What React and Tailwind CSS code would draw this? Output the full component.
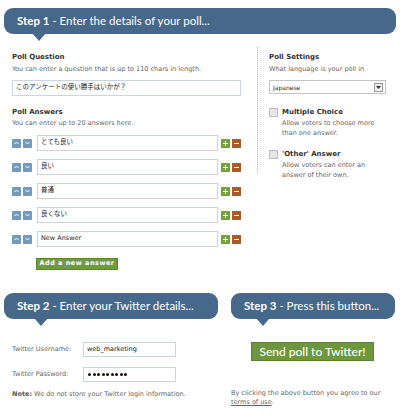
import React from "react";

const small = "font-['DejaVu_Sans',sans-serif] text-[6.5px] text-[#666]";
const head = "font-['DejaVu_Sans',sans-serif] text-[7px] font-bold text-[#333]";
const field = "font-['DejaVu_Sans','Noto_Sans_CJK_JP',sans-serif] text-[6.5px] text-[#222]";

const Banner = ({ step, text, tip }) => (
  <div className="relative h-[26px] rounded-[9px] bg-[#46688a] flex items-center pl-[13px]">
    <span className="font-['Lato',sans-serif] text-[11.5px] text-white whitespace-nowrap">
      <b className="font-bold">Step {step}</b> - {text}
    </span>
    <svg
      className="absolute top-[25px]"
      style={{ left: tip }}
      width="14"
      height="8"
      viewBox="0 0 14 8"
    >
      <path d="M0 0 L14 0 L7 8 Z" fill="#46688a" />
    </svg>
  </div>
);

const Arrow = ({ up }) => (
  <div className="w-[9px] h-[9px] bg-[#7399bd] rounded-[1px] flex items-center justify-center">
    <svg width="5" height="4" viewBox="0 0 5 4">
      <path
        d={up ? "M0.5 3 L2.5 1 L4.5 3" : "M0.5 1 L2.5 3 L4.5 1"}
        stroke="white"
        strokeWidth="1"
        fill="none"
      />
    </svg>
  </div>
);

const AnswerRow = ({ value }) => (
  <div className="flex items-center h-[16px]">
    <Arrow up />
    <div className="w-[2px]" />
    <Arrow />
    <div className={`ml-[5px] w-[181px] h-[16px] border border-[#c9d5e0] bg-white flex items-center px-[3px] ${field}`}>
      {value}
    </div>
    <div className="ml-[3px] w-[9px] h-[9px] bg-[#76a03c] flex items-center justify-center">
      <svg width="5" height="5" viewBox="0 0 5 5">
        <path d="M2.5 0 V5 M0 2.5 H5" stroke="white" strokeWidth="1" />
      </svg>
    </div>
    <div className="ml-[2px] w-[9px] h-[9px] bg-[#a65a30] flex items-center justify-center">
      <div className="w-[5px] h-[1px] bg-white" />
    </div>
  </div>
);

const Check = ({ title, lines }) => (
  <div className="flex">
    <div className="mt-[1px] w-[9px] h-[9px] border border-[#bbb] bg-[#e6e6e6]" />
    <div className="ml-[4px]">
      <div className={`${head} text-[6.5px] leading-[10px]`}>{title}</div>
      <div className={`${small} text-[5.8px] leading-[10px] mt-[1px]`}>
        {lines.map((l) => (
          <div key={l} className="whitespace-nowrap">{l}</div>
        ))}
      </div>
    </div>
  </div>
);

export default function App() {
  const answers = ["とても良い", "良い", "普通", "良くない", "New Answer"];
  return (
    <div className="w-[400px] h-[416px] bg-white overflow-hidden antialiased">
      <div className="pt-[8px] px-[4px]">
        <Banner step="1" text="Enter the details of your poll..." tip="28px" />
      </div>

      <div className="flex mt-[18px]">
        <div className="ml-[12px] w-[229px]">
          <div className={`${head} leading-[10px]`}>Poll Question</div>
          <div className={`${small} leading-[10px] mt-[2px]`}>
            You can enter a question that is up to 110 chars in length.
          </div>
          <div className={`mt-[6px] h-[16px] border border-[#c9d5e0] flex items-center px-[3px] ${field}`}>
            このアンケートの使い勝手はいかが？
          </div>
          <div className={`${head} leading-[10px] mt-[11px]`}>Poll Answers</div>
          <div className={`${small} leading-[10px] mt-[1px]`}>
            You can enter up to 20 answers here.
          </div>
          <div className="mt-[7px] flex flex-col gap-[8px]">
            {answers.map((a) => (
              <AnswerRow key={a} value={a} />
            ))}
          </div>
          <div className="ml-[24px] mt-[11px] w-[82px] h-[12px] bg-[#6f9a3d] border border-[#5d8530] flex items-center justify-center font-['DejaVu_Sans',sans-serif] text-[6.5px] font-bold text-white tracking-[0.5px]">
            Add a new answer
          </div>
        </div>

        <div className="ml-[16px] mt-[-5px] h-[126px] border-l border-dotted border-[#bbb]" />

        <div className="ml-[11px] w-[117px]">
          <div className={`${head} leading-[10px]`}>Poll Settings</div>
          <div className={`${small} text-[5.8px] leading-[10px] mt-[2px]`}>
            What language is your poll in
          </div>
          <div className="mt-[6px] h-[14px] border border-[#c4c4c4] flex items-center justify-between pl-[3px] pr-[2px]">
            <span className="font-['DejaVu_Sans',sans-serif] text-[6px] text-[#222]">Japanese</span>
            <div className="w-[9px] h-[9px] border border-[#999] bg-[#eee] flex items-center justify-center">
              <svg width="5" height="3" viewBox="0 0 5 3">
                <path d="M0 0 L5 0 L2.5 3 Z" fill="#333" />
              </svg>
            </div>
          </div>
          <div className="mt-[13px]">
            <Check title="Multiple Choice" lines={["Allow voters to choose more", "than one answer."]} />
          </div>
          <div className="mt-[11px]">
            <Check title="'Other' Answer" lines={["Allow voters can enter an", "answer of their own."]} />
          </div>
        </div>
      </div>

      <div className="flex mt-[23px] px-[4px] gap-[13px]">
        <div className="w-[214px]">
          <Banner step="2" text="Enter your Twitter details..." tip="30px" />
        </div>
        <div className="w-[164px]">
          <Banner step="3" text="Press this button..." tip="25px" />
        </div>
      </div>

      <div className="flex mt-[23px]">
        <div className="ml-[12px] w-[214px]">
          <div className="flex items-center h-[15px]">
            <span className={`${small} text-[#555] w-[71px]`}>Twitter Username:</span>
            <div className={`w-[93px] h-[15px] border border-[#c9d5e0] flex items-center px-[3px] ${field}`}>
              web_marketing
            </div>
          </div>
          <div className="flex items-center h-[15px] mt-[10px]">
            <span className={`${small} text-[#555] w-[71px]`}>Twitter Password:</span>
            <div className="w-[93px] h-[15px] border border-[#c9d5e0] flex items-center px-[4px] gap-[1.5px]">
              {Array.from({ length: 9 }).map((_, i) => (
                <div key={i} className="w-[3px] h-[3px] rounded-full bg-[#111]" />
              ))}
            </div>
          </div>
          <div className={`${small} mt-[8px]`}>
            <b className="text-[#555]">Note:</b> We do not store your Twitter login information.
          </div>
        </div>
        <div className="ml-[5px] w-[164px]">
          <div className="ml-[20px] w-[123px] h-[19px] bg-[#6e973d] border border-[#5c8230] flex items-center justify-center font-['Lato',sans-serif] text-[12px] font-medium text-white">
            Send poll to Twitter!
          </div>
          <div className={`${small} leading-[9px] mt-[28px]`}>
            By clicking the above button you agree to our
            <br />
            <span className="underline">terms of use</span>.
          </div>
        </div>
      </div>
    </div>
  );
}
